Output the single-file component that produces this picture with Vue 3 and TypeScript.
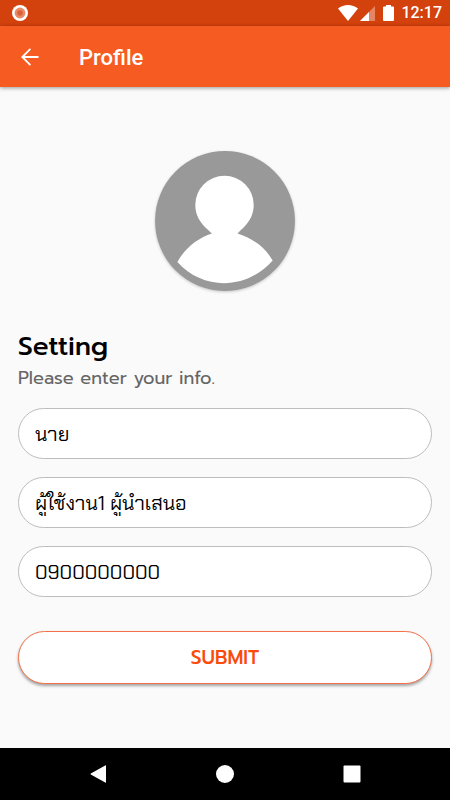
<script setup lang="ts">
import { ref } from 'vue'

const title = ref('นาย')
const fullName = ref('ผู้ใช้งาน1 ผู้นำเสนอ')
const phone = ref('0900000000')
</script>

<template>
  <div class="screen">
    <div class="status-bar">
      <svg class="record" width="16" height="16" viewBox="0 0 16 16" aria-hidden="true">
        <circle cx="8" cy="8" r="8" fill="#fff" />
        <circle cx="8" cy="8" r="5.4" fill="#e98a68" />
        <circle cx="8" cy="8" r="2.8" fill="#d96339" />
      </svg>
      <div class="indicators">
        <svg width="20" height="16" viewBox="0 0 20 16" aria-hidden="true">
          <path d="M0 3.6C5.6-1.2 14.4-1.2 20 3.6L10 16Z" fill="#fff" />
        </svg>
        <svg class="signal" width="15" height="16" viewBox="0 0 15 16" aria-hidden="true">
          <path d="M15 1V16H0Z" fill="#e48563" />
          <path d="M9 7V16H0Z" fill="#fff" />
        </svg>
        <svg class="battery" width="11" height="16" viewBox="0 0 11 16" aria-hidden="true">
          <path d="M3 0H8V1.6H10Q11 1.6 11 2.6V15Q11 16 10 16H1Q0 16 0 15V2.6Q0 1.6 1 1.6H3Z" fill="#fff" />
        </svg>
        <span class="clock">12:17</span>
      </div>
    </div>

    <header class="app-bar">
      <button class="back" type="button" aria-label="Back">
        <svg width="18" height="18" viewBox="0 0 18 18" fill="none" stroke="#fff" stroke-width="1.8" aria-hidden="true">
          <path d="M17.5 9H1.4M9.4 0.9L1.3 9L9.4 17.1" />
        </svg>
      </button>
      <h1>Profile</h1>
    </header>

    <main class="content">
      <div class="avatar">
        <svg viewBox="0 0 140 140" role="img" aria-label="Profile picture">
          <circle cx="70" cy="70" r="70" fill="#999" />
          <path
            d="M57 82.5C51 77 40.3 69 40.3 54A29.2 29.2 0 0 1 98.700 54C98.700 69 88 77 82.500 82.500C97 87 109.500 95.500 117.700 109.500C91 139.500 48 139.500 22.400 111C30 97 43 87 57 82.500Z"
            fill="#fff"
          />
        </svg>
      </div>

      <h2>Setting</h2>
      <p class="hint">Please enter your info.</p>

      <form class="form" @submit.prevent>
        <input v-model="title" type="text" aria-label="Title" />
        <input v-model="fullName" type="text" aria-label="Full name" />
        <input v-model="phone" type="tel" aria-label="Phone number" />
        <button class="submit" type="submit">SUBMIT</button>
      </form>
    </main>

    <nav class="nav-bar">
      <button type="button" aria-label="Back">
        <svg width="18" height="18" viewBox="0 0 18 18" aria-hidden="true">
          <path d="M17 0.8V17.200Q17 18 16.200 17.600L1.800 9.500Q1.200 9 1.800 8.500L16.200 0.400Q17 0 17 0.800Z" fill="#fff" />
        </svg>
      </button>
      <button type="button" aria-label="Home">
        <svg width="18" height="18" viewBox="0 0 18 18" aria-hidden="true">
          <circle cx="9" cy="9" r="9" fill="#fff" />
        </svg>
      </button>
      <button type="button" aria-label="Recent apps">
        <svg width="18" height="18" viewBox="0 0 18 18" aria-hidden="true">
          <rect x="0.500" y="0.500" width="17" height="17" rx="1" fill="#fff" />
        </svg>
      </button>
    </nav>
  </div>
</template>

<style>
body {
  margin: 0;
  background: #fafafa;
}
</style>

<style scoped>
.screen {
  display: flex;
  flex-direction: column;
  min-height: 100vh;
  background: #fafafa;
  color: #000;
  font-family: Prompt, Inter, "Noto Sans Thai", "Noto Sans", sans-serif;
}

svg {
  display: block;
}

button {
  margin: 0;
  padding: 0;
  border: 0;
  background: none;
  font: inherit;
  cursor: pointer;
}

.status-bar {
  display: flex;
  align-items: center;
  justify-content: space-between;
  height: 26px;
  padding: 0 8px 0 12px;
  background: #d3410c;
}

.indicators {
  display: flex;
  align-items: center;
}

.signal {
  margin-left: 2px;
}

.battery {
  margin: 0 7px 0 8px;
}

.clock {
  color: #fff;
  font: 500 16px/28px Roboto, sans-serif;
}

.app-bar {
  display: flex;
  align-items: center;
  gap: 40px;
  height: 61px;
  padding: 0 21px;
  background: #f65b22;
  box-shadow: 0 1px 4px rgba(0, 0, 0, 0.4);
}

.app-bar h1 {
  margin: 0;
  padding-top: 2px;
  color: #fff;
  font: 500 22px/28px Roboto, sans-serif;
}

.content {
  flex: 1;
  padding: 64px 18px;
}

.avatar {
  width: 140px;
  margin: 0 auto;
  border-radius: 50%;
  box-shadow: 0 1px 3px rgba(0, 0, 0, 0.2);
}

h2 {
  margin: 39px 0 0;
  font-size: 26px;
  font-weight: 500;
  line-height: 34px;
}

.hint {
  margin: 3px 0 19px;
  color: #666;
  font-size: 18px;
  font-weight: 400;
  line-height: 22px;
}

.form {
  display: flex;
  flex-direction: column;
  gap: 18px;
}

input {
  box-sizing: border-box;
  width: 100%;
  height: 51px;
  margin: 0;
  padding: 0 16px;
  border: 1px solid #bdbdbd;
  border-radius: 26px;
  outline: 0;
  background: #fff;
  color: #000;
  font-family: "Chakra Petch", "Bai Jamjuree", Sarabun, "Noto Sans Thai", Inter, sans-serif;
  font-size: 20px;
  font-weight: 400;
}

.submit {
  height: 53px;
  margin-top: 16px;
  border: 1px solid #f4704a;
  border-radius: 27px;
  background: #fff;
  box-shadow: 0 2px 3px rgba(0, 0, 0, 0.35);
  color: #fa4b0c;
  font-size: 19px;
  font-weight: 500;
}

.nav-bar {
  display: flex;
  justify-content: space-around;
  align-items: center;
  height: 52px;
  padding: 0 35px;
  background: #000;
}
</style>
